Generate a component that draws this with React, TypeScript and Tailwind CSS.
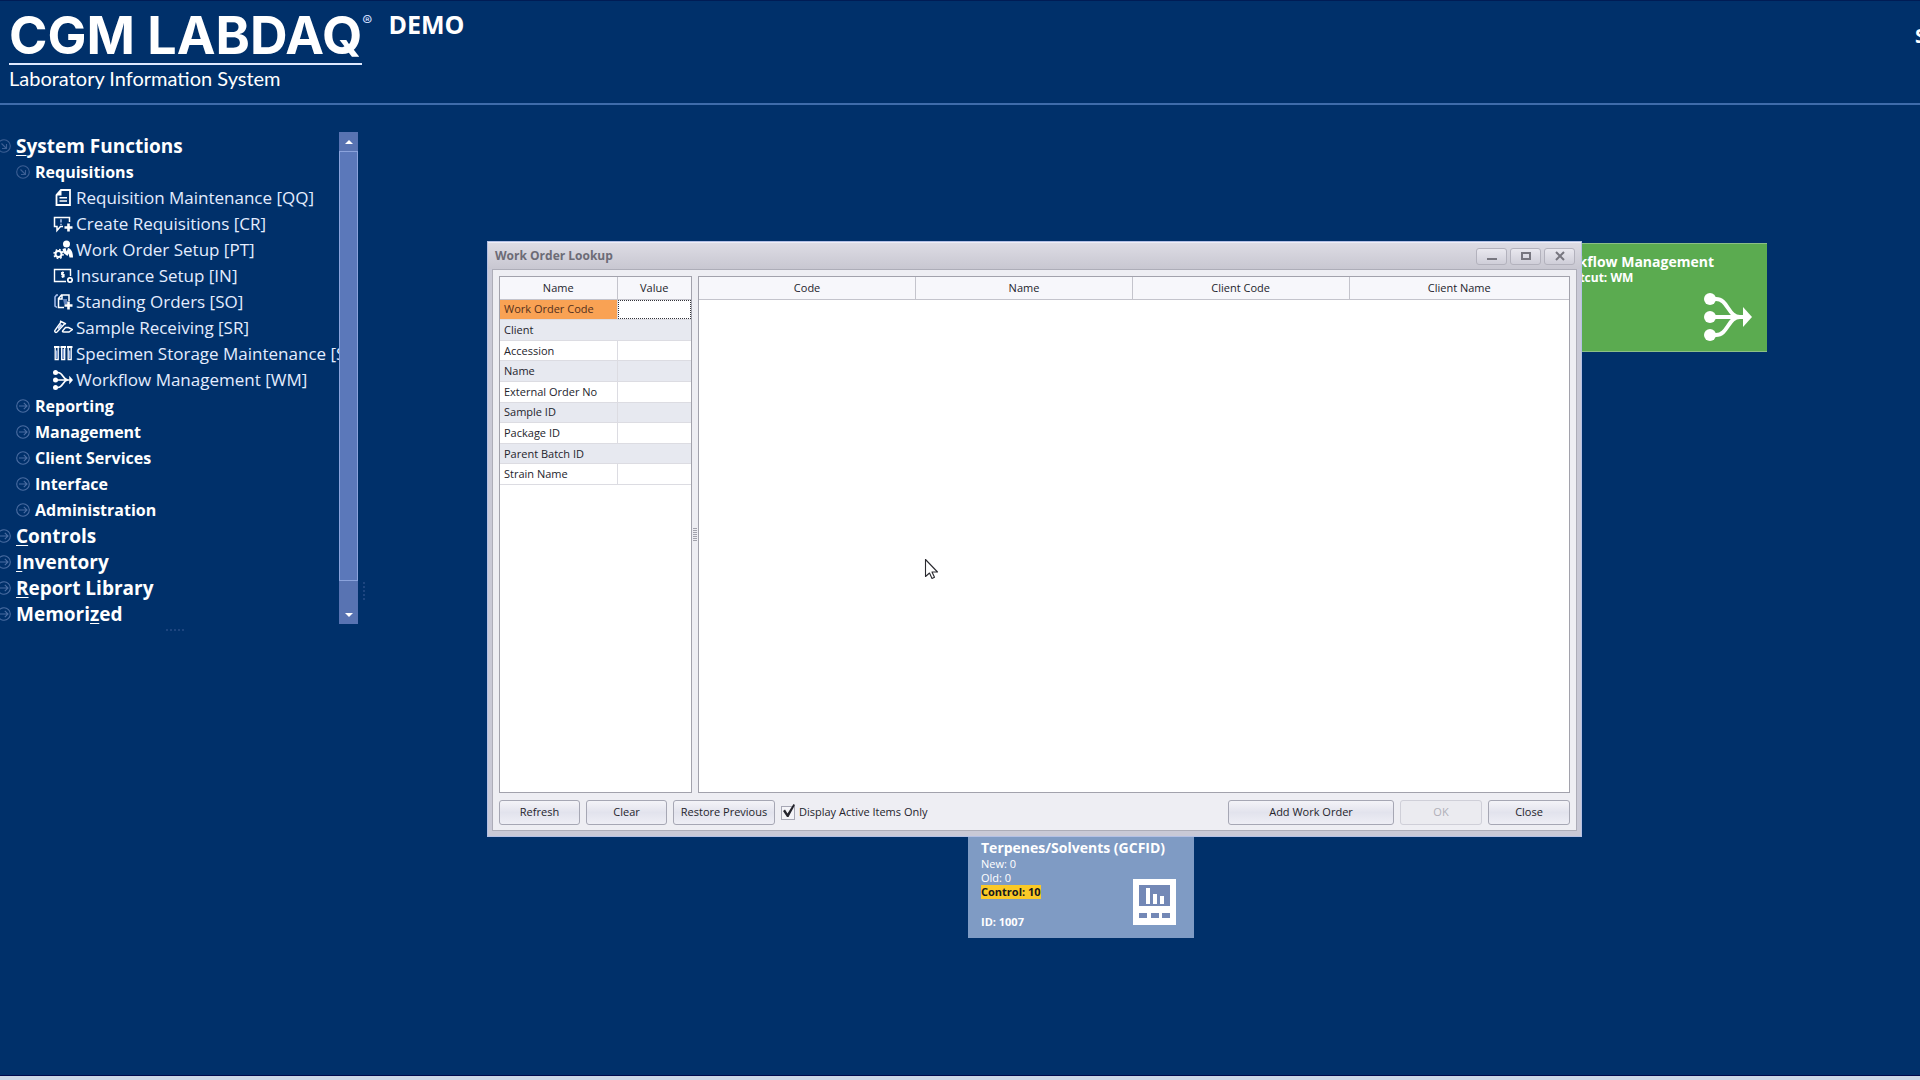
import type { ReactNode } from "react";

const iconBox = "h-[20px] w-[20px] shrink-0";

const DocIcon = () => (
  <svg className={iconBox} viewBox="0 0 20 20" fill="none" stroke="#fff" strokeWidth="1.800">
    <path d="M8 2h9v15H3.500V7z" />
    <path d="M3 7.500V6.500L7.500 2h1v5.500z" fill="#fff" stroke="none" />
    <path d="M6.500 9.700h7.500M6.500 13h7.500" strokeWidth="1.600" />
  </svg>
);
const CreateIcon = () => (
  <svg className={iconBox} viewBox="0 0 20 20" fill="none" stroke="#fff" strokeWidth="1.500">
    <path d="M16.500 8V3.500H1.500v9H4v4l3.500-4H10" />
    <path d="M8 5.200v3.300M8 9.700v1.200" strokeWidth="1.400" stroke="#b9cdf5" />
    <path d="M15.500 9.500v8M11.500 13.500h8" strokeWidth="2.600" />
  </svg>
);
const SetupIcon = () => (
  <svg className={iconBox} viewBox="0 0 20 20" fill="none" stroke="#fff">
    <circle cx="13.500" cy="4" r="3.500" fill="#fff" stroke="none" />
    <path d="M9.500 9l3-1 1.200 3.500L15 8c3 .5 5 4 5 9.500h-3.500l-1-4-1 2.500-4-3z" fill="#fff" stroke="none" />
    <circle cx="5.500" cy="14" r="3" strokeWidth="2" />
    <circle cx="5.500" cy="14" r="4.500" strokeWidth="1.500" strokeDasharray="1.700 1.830" />
  </svg>
);
const InsuranceIcon = () => (
  <svg className={iconBox} viewBox="0 0 20 20" fill="none" stroke="#fff" strokeWidth="1.400">
    <path d="M17.500 10V3.500H1.500v12H13" />
    <path d="M11 6.700H8.700v2H11v2H8.500M9.800 5.500v6.500" strokeWidth="1.200" />
    <circle cx="17" cy="14" r="2.200" strokeWidth="1.700" />
  </svg>
);
const StandingIcon = () => (
  <svg className={iconBox} viewBox="0 0 20 20" fill="none" stroke="#fff" strokeWidth="1.500">
    <path d="M5 3H3.500L2 5v9l2 1.500" stroke="#a9c0ee" />
    <path d="M11 15.500H5.500V6.500L8.500 3h7.500v6M5.500 7h3.500V3" />
    <path d="M10 7h4v5h-3z" fill="#6485bd" stroke="none" />
    <path d="M15.500 9.500v8M11.500 13.500h8" strokeWidth="2.600" />
  </svg>
);
const SampleIcon = () => (
  <svg className={iconBox} viewBox="0 0 20 20" fill="none" stroke="#fff" strokeWidth="1.400">
    <path d="M7 3l6 3M8 4L1.800 12.500c-.5 1.500 1 2.500 2.200 1.500L11.500 6" />
    <path d="M5 10.500l3.500-4" strokeWidth="2" stroke="#c9d8f8" />
    <path d="M9.500 13l3-3.500h3l4 2-3.500 2.500h-5c-2 0-2-1-.5-2" />
  </svg>
);
const TubesIcon = () => (
  <svg className={iconBox} viewBox="0 0 20 20" fill="none" stroke="#fff" strokeWidth="1.300">
    <path d="M1 3h5.500M7.500 3H13M14 3h5.500" strokeWidth="1.800" />
    <path d="M2.200 3v12.500h3V3M8.700 3v12.500h3V3M15.200 3v12.500h3V3" />
    <path d="M3.700 6.500v8M10.200 5v9.500M16.700 6.500v8" stroke="#8fabdf" strokeWidth="1.500" />
  </svg>
);
const FlowIcon = ({ size = iconBox }: { size?: string }) => (
  <svg className={size} viewBox="0 0 48 48" fill="none" stroke="#fff" strokeWidth="4">
    <circle cx="6" cy="6" r="6" fill="#fff" stroke="none" />
    <circle cx="6" cy="24" r="6" fill="#fff" stroke="none" />
    <circle cx="6" cy="42" r="6" fill="#fff" stroke="none" />
    <path d="M6 6h6c12 0 12 18 24 18M6 42h6c12 0 12-18 24-18M6 24h34" />
    <path d="M39 14l9 10-9 10z" fill="#fff" stroke="none" />
  </svg>
);
const ArrowCircle = ({ open = false }: { open?: boolean }) => (
  <svg
    className="h-[14px] w-[14px] shrink-0"
    viewBox="0 0 14 14"
    fill="none"
    stroke={open ? "#3c5f94" : "#4a6da2"}
    strokeWidth="1.100"
  >
    <circle cx="7" cy="7" r="6.300" />
    {open ? <path d="M4.500 4.500l5 5M9.500 5v4.500H5" /> : <path d="M3 7h8M7.800 3.800L11 7l-3.200 3.200" />}
  </svg>
);

const requisitions: [() => ReactNode, string][] = [
  [DocIcon, "Requisition Maintenance [QQ]"],
  [CreateIcon, "Create Requisitions [CR]"],
  [SetupIcon, "Work Order Setup [PT]"],
  [InsuranceIcon, "Insurance Setup [IN]"],
  [StandingIcon, "Standing Orders [SO]"],
  [SampleIcon, "Sample Receiving [SR]"],
  [TubesIcon, "Specimen Storage Maintenance [S"],
  [() => <FlowIcon />, "Workflow Management [WM]"],
];

function TopItem({ open, before = "", hot, after }: { open?: boolean; before?: string; hot: string; after: string }) {
  return (
    <button className="-ml-[3px] flex h-[26px] items-center gap-[5px] text-[19px] leading-[26px] font-bold whitespace-nowrap">
      <ArrowCircle open={open} />
      <span>
        {before}
        <span className="underline decoration-1 underline-offset-2">{hot}</span>
        {after}
      </span>
    </button>
  );
}

function SubItem({ open, label }: { open?: boolean; label: string }) {
  return (
    <button className="ml-4 flex h-[26px] items-center gap-[5px] text-[16px] leading-[26px] font-bold whitespace-nowrap">
      <ArrowCircle open={open} />
      {label}
    </button>
  );
}

function Sidebar() {
  return (
    <nav className="flex h-[492px] w-[358px]" aria-label="Functions">
      <ul className="min-w-0 flex-1 overflow-x-clip pt-px">
        <li>
          <TopItem open hot="S" after="ystem Functions" />
          <ul>
            <li>
              <SubItem open label="Requisitions" />
              <ul>
                {requisitions.map(([Icon, label]) => (
                  <li key={label}>
                    <button className="ml-[53px] flex h-[26px] items-center gap-[3px] text-[17px] leading-[26px] whitespace-nowrap text-[#e4edff]">
                      <Icon />
                      {label}
                    </button>
                  </li>
                ))}
              </ul>
            </li>
            {["Reporting", "Management", "Client Services", "Interface", "Administration"].map((l) => (
              <li key={l}>
                <SubItem label={l} />
              </li>
            ))}
          </ul>
        </li>
        <li><TopItem hot="C" after="ontrols" /></li>
        <li><TopItem hot="I" after="nventory" /></li>
        <li><TopItem hot="R" after="eport Library" /></li>
        <li><TopItem before="Memori" hot="z" after="ed" /></li>
      </ul>
      <div className="flex w-[19px] flex-col bg-[#5873b2]">
        <button aria-label="Scroll up" className="flex h-[19px] items-center justify-center">
          <svg className="h-1 w-2" viewBox="0 0 8 4"><path d="M0 4l4-4 4 4z" fill="#fff" /></svg>
        </button>
        <div className="flex-1 border border-[#8ba3dc] bg-[#5b78ba]" />
        <div className="h-[25px]" />
        <button aria-label="Scroll down" className="flex h-[18px] items-center justify-center">
          <svg className="h-1 w-2" viewBox="0 0 8 4"><path d="M0 0l4 4 4-4z" fill="#fff" /></svg>
        </button>
      </div>
    </nav>
  );
}

const criteria: [string, boolean][] = [
  ["Work Order Code", true],
  ["Client", false],
  ["Accession", true],
  ["Name", true],
  ["External Order No", true],
  ["Sample ID", true],
  ["Package ID", true],
  ["Parent Batch ID", false],
  ["Strain Name", true],
];

const th = "h-[22px] border-b border-[#c4c4cc] bg-[#f7f7fb] p-0 text-center leading-[16px] font-normal";
const btn =
  "h-[25px] rounded-[3px] border border-[#a6a7b4] bg-linear-to-b from-[#f4f4f8] via-[#e2e3ed] to-[#eeeef5] whitespace-nowrap";
const winBtn =
  "flex h-[17px] w-[31px] items-center justify-center rounded-[3px] border border-[#b3b2bd] bg-linear-to-b from-[#e9e8ef] to-[#cfced8]";

function Lookup() {
  return (
    <section
      role="dialog"
      aria-label="Work Order Lookup"
      className="absolute top-[241px] left-[487px] flex h-[596px] w-[1095px] flex-col border border-[#b4c0e4] bg-[#c9c9d6] font-['Open_Sans',sans-serif] text-[11px] text-[#24242c]"
    >
      <div className="flex h-[27px] shrink-0 items-center justify-between border-t border-[#eeeef6] bg-linear-to-b from-[#dddce4] to-[#c8c7d1] pr-[6px] pl-[7px]">
        <h2 className="text-[12px] font-bold text-[#6c6b76]">Work Order Lookup</h2>
        <div className="flex gap-[3px]">
          <button aria-label="Minimize" className={winBtn}>
            <svg className="h-[10px] w-[10px]" viewBox="0 0 10 10"><path d="M0 8h10" stroke="#77767f" strokeWidth="2" /></svg>
          </button>
          <button aria-label="Maximize" className={winBtn}>
            <svg className="h-[10px] w-[10px]" viewBox="0 0 10 10"><path d="M1 2h8v6H1z" fill="none" stroke="#77767f" strokeWidth="2" /></svg>
          </button>
          <button aria-label="Close window" className={winBtn}>
            <svg className="h-[10px] w-[10px]" viewBox="0 0 10 10"><path d="M1 1l8 8M9 1L1 9" stroke="#77767f" strokeWidth="2" /></svg>
          </button>
        </div>
      </div>
      <div className="mx-1 mb-[5px] flex flex-1 flex-col border border-[#adadb8] bg-[#eeeef3] px-[6px] pt-[6px] pb-[5px]">
        <div className="flex flex-1">
          <div className="w-[193px] border border-[#a2a2ac] bg-white">
            <table className="h-[208px] w-full table-fixed border-collapse">
              <thead>
                <tr>
                  <th className={`${th} w-[117px] border-r`}>Name</th>
                  <th className={th}>Value</th>
                </tr>
              </thead>
              <tbody>
                {criteria.map(([name, divided], i) => (
                  <tr key={name} className={i % 2 ? "bg-[#e7e9f0]" : "bg-white"}>
                    <th
                      scope="row"
                      className={`border-b border-[#dcdce2] py-0 pr-0 pl-1 text-left leading-[16px] font-normal ${divided ? "border-r" : ""} ${i === 0 ? "bg-[#f9a254] text-[#54301c]" : ""}`}
                    >
                      {name}
                    </th>
                    <td className="border-b border-[#dcdce2] p-0">
                      <input
                        aria-label={name}
                        className={`block h-[19px] w-full bg-transparent px-1 outline-none ${i === 0 ? "border border-dotted border-[#33333a]" : ""}`}
                      />
                    </td>
                  </tr>
                ))}
              </tbody>
            </table>
          </div>
          <div className="flex w-[6px] flex-col items-center justify-center gap-px">
            {[0, 1, 2, 3, 4, 5, 6].map((n) => (
              <span key={n} className="h-px w-[4px] bg-[#a2a2ac]" />
            ))}
          </div>
          <div className="flex-1 border border-[#a2a2ac] bg-white">
            <table className="w-full table-fixed border-collapse">
              <thead>
                <tr>
                  <th className={`${th} border-r`}>Code</th>
                  <th className={`${th} border-r`}>Name</th>
                  <th className={`${th} border-r`}>Client Code</th>
                  <th className={`${th} w-[220px]`}>Client Name</th>
                </tr>
              </thead>
            </table>
          </div>
        </div>
        <div className="mt-[7px] flex items-center">
          <button className={`${btn} w-[81px]`}>Refresh</button>
          <button className={`${btn} ml-[6px] w-[81px]`}>Clear</button>
          <button className={`${btn} ml-[6px] w-[102px]`}>Restore Previous</button>
          <label className="relative ml-[6px] flex items-center gap-1">
            <input
              type="checkbox"
              defaultChecked
              className="h-[14px] w-[14px] appearance-none border border-[#a6a7b4] bg-[#f4f4f8]"
            />
            <svg className="pointer-events-none absolute -top-px left-0 h-4 w-4" viewBox="0 0 16 16">
              <path d="M2 8l2-1.500 2.500 4L12.500 1 14 2 7.500 14H6z" fill="#24242c" />
            </svg>
            Display Active Items Only
          </label>
          <button className={`${btn} ml-auto w-[166px]`}>Add Work Order</button>
          <button disabled className="ml-[6px] h-[25px] w-[82px] rounded-[3px] border border-[#cfcfd8] bg-[#ebebf0] text-[#b0b0b8]">
            OK
          </button>
          <button className={`${btn} ml-[6px] w-[82px]`}>Close</button>
        </div>
      </div>
    </section>
  );
}

function Tiles() {
  return (
    <>
      <a href="#workflow" className="absolute top-[243px] left-[1541px] block h-[109px] w-[226px] border-y border-[#8cbf86] bg-[#5bab50]">
        <span className="flex flex-col pt-[8px] pl-[9px] font-bold">
          <span className="text-[14px] leading-[20px]">Workflow Management</span>
          <span className="pl-[2px] text-[12px] leading-[12px]">Shortcut: WM</span>
        </span>
        <span className="absolute right-[15px] bottom-[10px]">
          <FlowIcon size="h-[48px] w-[48px]" />
        </span>
      </a>
      <a href="#terpenes" className="absolute top-[830px] left-[968px] block h-[108px] w-[226px] bg-[#7f9bc4]">
        <span className="flex flex-col items-start pt-[8px] pl-[13px] text-[11px] leading-[14px]">
          <span className="text-[14px] leading-[19px] font-bold">Terpenes/Solvents (GCFID)</span>
          <span>New: 0</span>
          <span>Old: 0</span>
          <span className="bg-[#fbc926] font-bold text-[#17171c]">Control: 10</span>
          <span className="mt-4 font-bold">ID: 1007</span>
        </span>
        <svg className="absolute right-[18px] bottom-[13px] h-[46px] w-[43px]" viewBox="0 0 43 46">
          <path d="M0 0h43v46H0z" fill="#fff" />
          <path d="M6 6h31v21H6z" fill="#7388b6" />
          <path d="M13 9h4v16h-4zM20 15h4v10h-4zM27 17h4v8h-4z" fill="#fff" />
          <path d="M6 34h8v5H6zM18 34h8v5h-8zM29 34h8v5h-8z" fill="#7388b6" />
        </svg>
      </a>
    </>
  );
}

function Pointer() {
  return (
    <svg className="pointer-events-none absolute top-[558px] left-[924px] h-[22px] w-[15px]" viewBox="0 0 15 22">
      <path
        d="M1.500 1.500v17l4-3.500 2.500 5.500 2.500-1.200L8 14h5.500z"
        fill="#fff"
        stroke="#2a2a30"
        strokeWidth="1.100"
        strokeLinejoin="round"
      />
    </svg>
  );
}

export default function App() {
  return (
    <div className="relative flex min-h-screen flex-col overflow-hidden bg-[#00306a] font-['Open_Sans','Noto_Sans',sans-serif] text-white">
      <header className="flex h-[105px] items-start justify-between border-b-2 border-[#3f6cab] pl-[9px] shadow-[inset_0_1px_0_#001c55]">
        <div className="flex items-start">
          <div className="pt-[14px]">
            <h1 className="border-b-2 border-[#dfe9ff] pb-[5px] font-['Inter',sans-serif] text-[52px] leading-[44px] font-bold">
              CGM LABDAQ
            </h1>
            <p className="font-['Lato',sans-serif] text-[20px] leading-[26px]">Laboratory Information System</p>
          </div>
          <span className="pt-[11px] font-['Inter',sans-serif] text-[15px] leading-[20px] text-[#c9dafc]">®</span>
          <p className="ml-[16px] pt-[9px] text-[25px] leading-[30px] font-bold">DEMO</p>
        </div>
        <p className="w-[5px] pt-[24px] text-[20px] leading-[24px] font-bold">S</p>
      </header>
      <main className="flex-1 pt-[27px]">
        <Sidebar />
        <div className="mt-[5px] ml-[166px] w-[18px] border-t-2 border-dotted border-[#1d457f]" />
      </main>
      <div className="absolute top-[582px] left-[363px] h-[18px] border-l-2 border-dotted border-[#1d457f]" />
      <Tiles />
      <Lookup />
      <Pointer />
      <footer className="h-[5px] border-t border-[#000a4c] bg-[#ccd7e6]" />
    </div>
  );
}
